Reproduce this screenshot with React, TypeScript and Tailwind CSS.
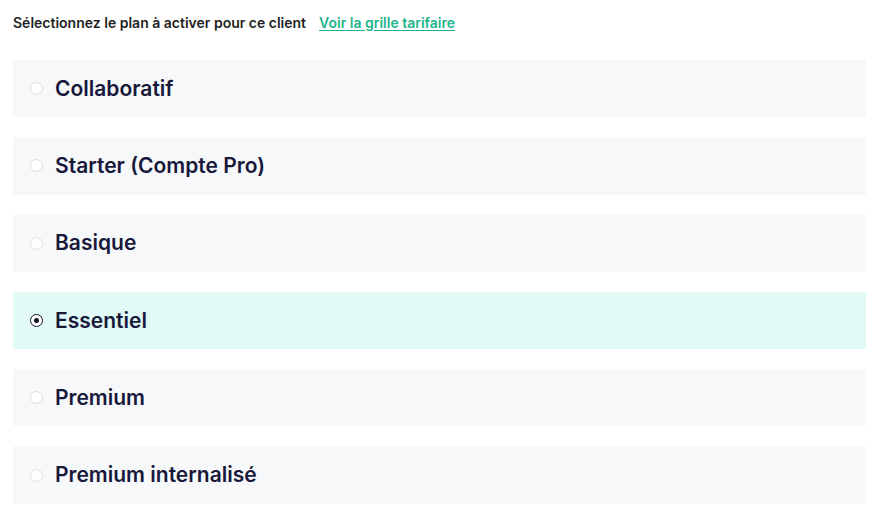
const plans = [
  'Collaboratif',
  'Starter (Compte Pro)',
  'Basique',
  'Essentiel',
  'Premium',
  'Premium internalisé',
];

const selected = 'Essentiel';

export default function App() {
  return (
    <div className="min-h-screen bg-white px-[13px] pt-[12px] font-['Inter',sans-serif]">
      <div className="flex items-center gap-[13px] h-[20px]">
        <span className="text-[14px] font-semibold text-[#1f1f24]">
          Sélectionnez le plan à activer pour ce client
        </span>
        <a href="#" className="text-[14px] font-semibold text-[#1fb58c] underline underline-offset-2">
          Voir la grille tarifaire
        </a>
      </div>

      <div className="mt-[28px] flex w-[853px] flex-col gap-[20px]">
        {plans.map((plan) => {
          const isSelected = plan === selected;
          return (
            <label
              key={plan}
              className={`flex h-[57.3px] items-center gap-[12px] pl-[17px] ${
                isSelected ? 'bg-[#e1faf5]' : 'bg-[#f7f8fa]'
              }`}
            >
              {isSelected ? (
                <span className="flex h-[13px] w-[13px] items-center justify-center rounded-full border-[1.5px] border-[#14142b] bg-white">
                  <span className="h-[5px] w-[5px] rounded-full bg-[#14142b]" />
                </span>
              ) : (
                <span className="h-[13px] w-[13px] rounded-full border border-[#dcdde2] bg-white" />
              )}
              <span className="text-[21px] font-semibold text-[#18183a]">{plan}</span>
            </label>
          );
        })}
      </div>
    </div>
  );
}
